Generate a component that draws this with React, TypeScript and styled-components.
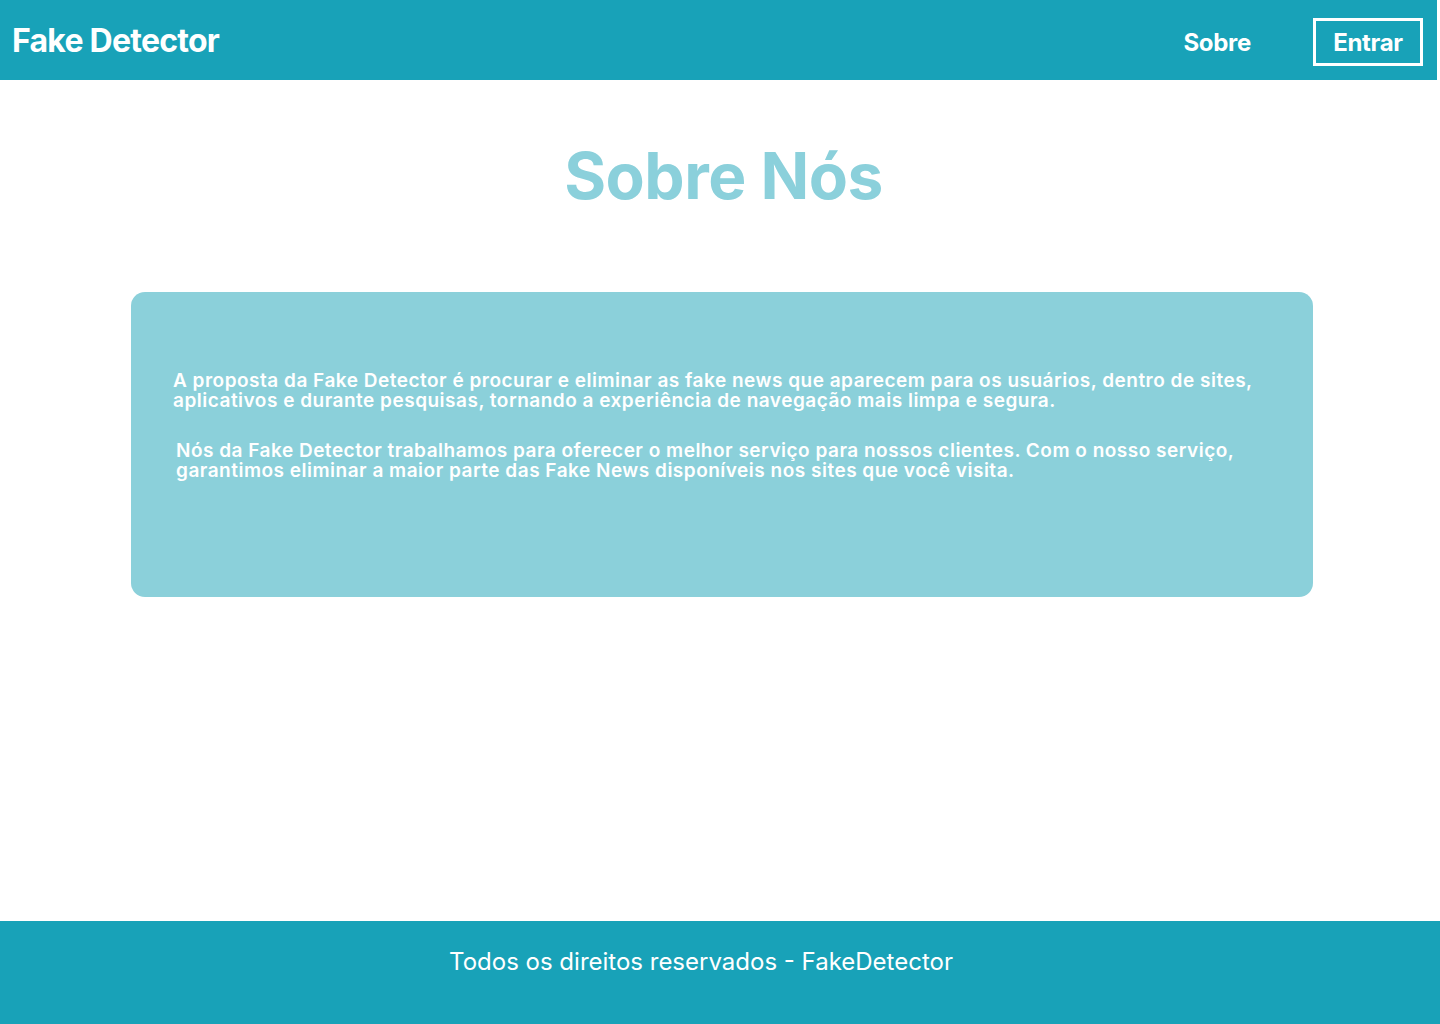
import React from "react";
import styled, { createGlobalStyle } from "styled-components";

const Global = createGlobalStyle`
  html, body { margin: 0; padding: 0; background: #ffffff; }
  body { font-family: Inter, "Noto Sans", sans-serif; }
  * { box-sizing: border-box; }
`;

const Page = styled.div`
  min-height: 1024px;
  display: flex;
  flex-direction: column;
`;

const Header = styled.header`
  height: 80px;
  width: calc(100% - 3px);
  background: #18a2b8;
  display: flex;
  align-items: center;
  justify-content: space-between;
  padding: 0 14px 0 12px;
`;

const Logo = styled.div`
  color: #ffffff;
  font-size: 32px;
  font-weight: 700;
  letter-spacing: -0.75px;
`;

const Nav = styled.nav`
  display: flex;
  align-items: center;
  gap: 62px;
`;

const NavLink = styled.a`
  color: #ffffff;
  font-size: 24px;
  font-weight: 700;
  text-decoration: none;
  letter-spacing: -0.3px;
  padding-top: 4px;
`;

const LoginButton = styled.button`
  width: 110px;
  height: 48px;
  margin-top: 4px;
  border: 3px solid #ffffff;
  background: transparent;
  color: #ffffff;
  font-family: Inter, "Noto Sans", sans-serif;
  font-size: 24px;
  font-weight: 700;
  letter-spacing: -0.3px;
  padding: 0;
  cursor: pointer;
`;

const Main = styled.main`
  flex: 1;
  display: flex;
  flex-direction: column;
  align-items: center;
  padding-top: 56px;
`;

const Title = styled.h1`
  margin: 0;
  color: #8bd0db;
  font-size: 64px;
  font-weight: 700;
  line-height: 80px;
  letter-spacing: -0.5px;
  padding-left: 7px;
`;

const Card = styled.section`
  margin: 76px 0 0 4px;
  width: 1182px;
  height: 305px;
  background: #8bd0da;
  border-radius: 14px;
  padding: 79px 40px 0 42px;
  display: flex;
  flex-direction: column;
  gap: 30px;
`;

const Paragraph = styled.p<{ $indent?: number }>`
  margin: 0;
  padding-left: ${(p) => p.$indent ?? 0}px;
  color: #ffffff;
  font-size: 19px;
  font-weight: 600;
  line-height: 20px;
  letter-spacing: 0.5px;
`;

const Footer = styled.footer`
  height: 103px;
  background: #18a2b8;
  display: flex;
  justify-content: center;
  padding: 26px 38px 0 0;
`;

const FooterText = styled.p`
  margin: 0;
  color: #ffffff;
  font-size: 24px;
  font-weight: 400;
  line-height: 30px;
`;

export default function App() {
  return (
    <>
      <Global />
      <Page>
        <Header>
          <Logo>Fake Detector</Logo>
          <Nav>
            <NavLink href="#">Sobre</NavLink>
            <LoginButton>Entrar</LoginButton>
          </Nav>
        </Header>
        <Main>
          <Title>Sobre Nós</Title>
          <Card>
            <Paragraph>
              A proposta da Fake Detector é procurar e eliminar as fake news que aparecem para os usuários, dentro de sites,
              aplicativos e durante pesquisas, tornando a experiência de navegação mais limpa e segura.
            </Paragraph>
            <Paragraph $indent={3}>
              Nós da Fake Detector trabalhamos para oferecer o melhor serviço para nossos clientes. Com o nosso serviço,
              garantimos eliminar a maior parte das Fake News disponíveis nos sites que você visita.
            </Paragraph>
          </Card>
        </Main>
        <Footer>
          <FooterText>Todos os direitos reservados - FakeDetector</FooterText>
        </Footer>
      </Page>
    </>
  );
}
